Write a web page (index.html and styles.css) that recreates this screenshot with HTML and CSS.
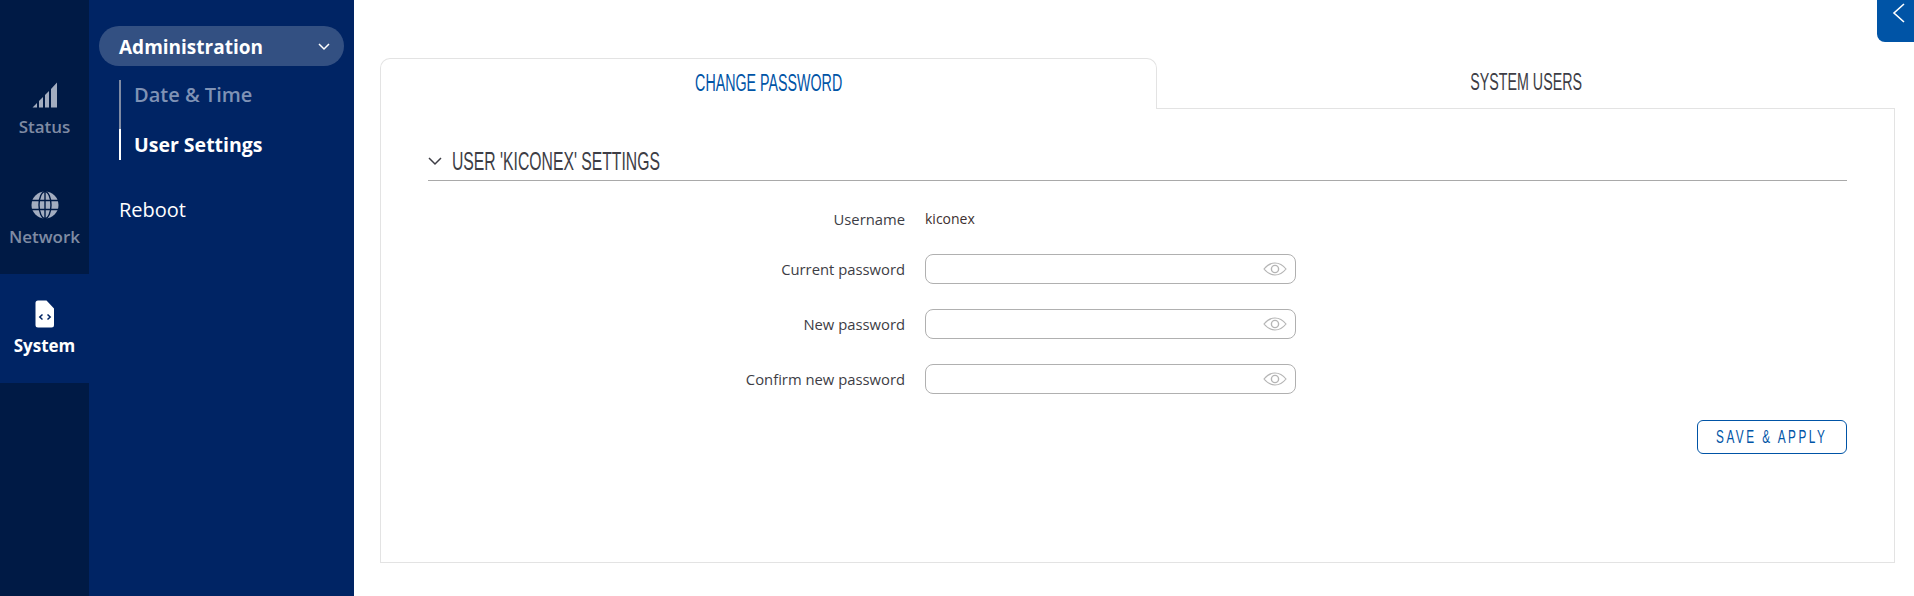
FILE: index.html
```html
<!DOCTYPE html>
<html lang="en">

<head>
    <meta charset="UTF-8">
    <title>User Settings</title>
    <link rel="stylesheet" href="styles.css">
</head>

<body>
    <nav class="rail">
        <a class="rail-item">
            <svg class="rail-icon" width="26" height="26" viewBox="0 0 26 26">
                <path d="M0.500 25.500 L5 21 V25.500 Z M7 19 L11 15 V25.500 H7 Z M13 13 L17 9 V25.500 H13 Z M19 7 L25 0.500 V25.500 H19 Z" fill="currentColor"/>
            </svg>
            <span>Status</span>
        </a>
        <a class="rail-item">
            <svg class="rail-icon" width="28" height="28" viewBox="0 0 28 28">
                <circle cx="14" cy="14" r="13.5" fill="currentColor"/>
                <g fill="none" stroke="#001a45" stroke-width="1.4">
                    <ellipse cx="14" cy="14" rx="6" ry="13.5"/>
                    <path d="M14 0 V28 M0.5 9.5 H27.5 M0.5 18.5 H27.5"/>
                </g>
            </svg>
            <span>Network</span>
        </a>
        <a class="rail-item active">
            <svg class="rail-icon" width="20" height="28" viewBox="0 0 20 28">
                <path d="M3 0.5 H11.5 L19 8.5 V25 a2.5 2.5 0 0 1 -2.5 2.5 H3 A2.5 2.5 0 0 1 0.5 25 V3 A2.5 2.5 0 0 1 3 0.5 Z" fill="#fff"/>
                <path d="M7.5 14.5 L4.8 17 L7.5 19.5 M12.5 14.5 L15.2 17 L12.5 19.5" fill="none" stroke="#002464" stroke-width="1.5"/>
            </svg>
            <span>System</span>
        </a>
    </nav>

    <aside class="sidebar">
        <div class="menu-open">
            <span>Administration</span>
            <svg width="12" height="8" viewBox="0 0 12 8"><path d="M1 1 L6 6 L11 1" fill="none" stroke="#fff" stroke-width="1.5"/></svg>
        </div>
        <ul class="submenu">
            <li>Date &amp; Time</li>
            <li class="current">User Settings</li>
        </ul>
        <div class="menu-item">Reboot</div>
    </aside>

    <main class="content">
        <a class="collapse">
            <svg width="14" height="22" viewBox="0 0 14 22"><path d="M12 2 L2 11 L12 20" fill="none" stroke="#fff" stroke-width="1.6"/></svg>
        </a>
        <div class="tabs">
            <div class="tab selected"><span class="narrow">CHANGE PASSWORD</span></div>
            <div class="tab"><span class="narrow">SYSTEM USERS</span></div>
        </div>
        <section class="panel">
            <h2 class="section-title">
                <svg width="14" height="9" viewBox="0 0 14 9"><path d="M1 1 L7 7 L13 1" fill="none" stroke="#3d3d45" stroke-width="1.5"/></svg>
                <span class="narrow">USER 'KICONEX' SETTINGS</span>
            </h2>
            <div class="row row-text">
                <label>Username</label>
                <span class="value">kiconex</span>
            </div>
            <div class="row">
                <label>Current password</label>
                <div class="field">
                    <svg class="eye" width="24" height="14" viewBox="0 0 24 14"><path d="M1 7 C5 2 8.500 1 12 1 S19 2 23 7 C19 12 15.500 13 12 13 S5 12 1 7 Z" fill="none" stroke="#b5b5b5" stroke-width="1.200"/><circle cx="12" cy="7" r="3.600" fill="none" stroke="#b5b5b5" stroke-width="1.400"/></svg>
                </div>
            </div>
            <div class="row">
                <label>New password</label>
                <div class="field">
                    <svg class="eye" width="24" height="14" viewBox="0 0 24 14"><path d="M1 7 C5 2 8.500 1 12 1 S19 2 23 7 C19 12 15.500 13 12 13 S5 12 1 7 Z" fill="none" stroke="#b5b5b5" stroke-width="1.200"/><circle cx="12" cy="7" r="3.600" fill="none" stroke="#b5b5b5" stroke-width="1.400"/></svg>
                </div>
            </div>
            <div class="row">
                <label>Confirm new password</label>
                <div class="field">
                    <svg class="eye" width="24" height="14" viewBox="0 0 24 14"><path d="M1 7 C5 2 8.500 1 12 1 S19 2 23 7 C19 12 15.500 13 12 13 S5 12 1 7 Z" fill="none" stroke="#b5b5b5" stroke-width="1.200"/><circle cx="12" cy="7" r="3.600" fill="none" stroke="#b5b5b5" stroke-width="1.400"/></svg>
                </div>
            </div>
            <div class="actions">
                <button class="save"><span class="narrow">SAVE &amp; APPLY</span></button>
            </div>
        </section>
    </main>
</body>

</html>
```

FILE: styles.css
```css
* {
    margin: 0;
    padding: 0;
    box-sizing: border-box;
}

body {
    display: flex;
    height: 596px;
    overflow: hidden;
    background: #fff;
    font-family: "Open Sans", sans-serif;
    color: #3d3d45;
}

/* no condensed family here, so squeeze a regular one */
.narrow {
    display: inline-block;
    font-family: "Liberation Sans", sans-serif;
    white-space: nowrap;
    transform: scaleX(0.62);
}

.rail {
    width: 89px;
    flex-shrink: 0;
    padding-top: 56px;
    background: #001a45;
}

.rail-item {
    height: 109px;
    display: flex;
    flex-direction: column;
    align-items: center;
    padding-top: 26px;
    color: #a3adc0;
    font-size: 17px;
    font-weight: 600;
}

.rail-item span {
    margin-top: 5px;
    color: #7f8ba3;
    line-height: 26px;
}

.rail-item:first-child span {
    margin-top: 6px;
}

.rail-item.active {
    background: #002464;
}

.rail-item.active span {
    color: #fff;
    font-weight: 700;
}

.rail-icon {
    display: block;
}

.sidebar {
    width: 265px;
    flex-shrink: 0;
    padding: 26px 10px 0;
    background: #002464;
    color: #fff;
}

.menu-open {
    height: 40px;
    display: flex;
    align-items: center;
    justify-content: space-between;
    padding: 1px 14px 0 20px;
    border-radius: 20px;
    background: #335082;
    font-size: 19px;
    font-weight: 700;
}

.submenu {
    list-style: none;
    margin: 14px 0 0 20px;
}

.submenu li {
    height: 49px;
    line-height: 30px;
    padding-left: 13px;
    border-left: 2px solid #7f8ba3;
    color: #7f92b5;
    font-size: 20px;
    font-weight: 600;
}

.submenu li.current {
    height: 31px;
    border-left-color: #fff;
    color: #fff;
    line-height: 32px;
    font-size: 19.500px;
    font-weight: 700;
}

.menu-item {
    margin: 35px 0 0 20px;
    font-size: 20px;
    line-height: 30px;
}

.content {
    position: relative;
    flex: 1;
    padding: 58px 19px 33px 26px;
    display: flex;
    flex-direction: column;
}

.collapse {
    position: absolute;
    top: 0;
    right: 0;
    width: 37px;
    height: 42px;
    display: flex;
    align-items: flex-start;
    padding: 2px 0 0 15px;
    background: #0054a6;
    border-bottom-left-radius: 8px;
}

.tabs {
    display: flex;
    height: 51px;
}

.tab {
    flex: 1;
    text-align: center;
    line-height: 47px;
    border-bottom: 1px solid #e3e3e3;
    font-size: 23px;
}

.tab.selected {
    flex: 0 0 777px;
    border: 1px solid #e3e3e3;
    border-bottom: none;
    border-radius: 10px 10px 0 0;
    color: #0054a6;
}

.panel {
    flex: 1;
    padding: 0 47px;
    border: 1px solid #e3e3e3;
    border-top: none;
}

.section-title {
    display: flex;
    align-items: center;
    height: 45px;
    padding-top: 7px;
    margin-top: 27px;
    border-bottom: 1px solid #a9a9a9;
    font-size: 26px;
    font-weight: 400;
}

.section-title svg {
    flex-shrink: 0;
}

.section-title .narrow {
    margin-left: 10px;
    transform: scaleX(0.605);
    transform-origin: left center;
}

.row {
    display: flex;
    align-items: center;
    gap: 20px;
    margin-top: 25px;
    height: 30px;
    font-size: 14.800px;
}

.row-text {
    margin-top: 26px;
    height: 23px;
}

.row-text + .row {
    margin-top: 24px;
}

.row label {
    width: 477px;
    text-align: right;
}

.value {
    color: #3d2f2f;
    font-size: 14px;
}

.field {
    width: 371px;
    height: 30px;
    display: flex;
    align-items: center;
    justify-content: flex-end;
    padding-right: 8px;
    border: 1px solid #b0b0b0;
    border-radius: 8px;
}

.actions {
    display: flex;
    justify-content: flex-end;
    margin-top: 26px;
}

.save {
    width: 150px;
    height: 34px;
    display: flex;
    align-items: center;
    justify-content: center;
    background: #fff;
    border: 1px solid #0054a6;
    border-radius: 6px;
    color: #0054a6;
    font-size: 19px;
    letter-spacing: 4px;
}
```
